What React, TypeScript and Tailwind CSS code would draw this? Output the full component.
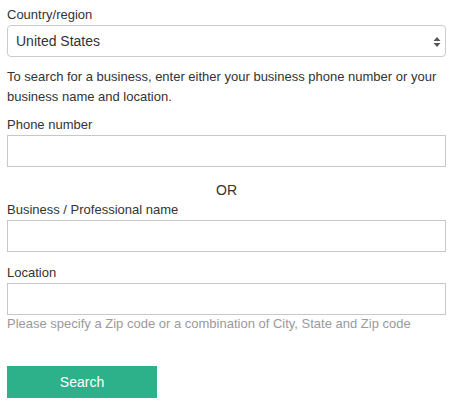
import React from "react";

const Label = ({ children, className = "" }: { children: React.ReactNode; className?: string }) => (
  <label className={`block text-[13px] leading-[18px] text-[#333] ${className}`}>{children}</label>
);

const TextBox = () => (
  <input type="text" className="block w-full h-[32px] border border-[#c8c8c8] bg-white px-2 text-[14px] outline-none" />
);

export default function App() {
  return (
    <div
      className="w-[451px] h-[417px] bg-white pl-[7px] pr-[5px] pt-[6px]"
      style={{ fontFamily: '"Liberation Sans", Arial, sans-serif' }}
    >
      <Label className="mb-px">Country/region</Label>
      <div className="relative h-[32px] border border-[#cbcbcb] rounded-[4px] bg-white flex items-center pl-[8px]">
        <span className="text-[14px] text-[#333]">United States</span>
        <svg className="absolute right-[4px] top-[10px]" width="8" height="12" viewBox="0 0 8 12">
          <path d="M4 1 L7.5 5 L0.5 5 Z" fill="#555" />
          <path d="M4 11 L7.5 7 L0.5 7 Z" fill="#555" />
        </svg>
      </div>
      <p className="mt-[10px] text-[13px] leading-[20px] text-[#333]">
        To search for a business, enter either your business phone number or your business name and location.
      </p>
      <Label className="mt-[9px] mb-px">Phone number</Label>
      <TextBox />
      <div className="mt-[13px] text-center text-[14px] leading-[20px] text-[#333]">OR</div>
      <Label className="mt-px mb-px">Business / Professional name</Label>
      <TextBox />
      <Label className="mt-[12px] mb-px">Location</Label>
      <TextBox />
      <div className="text-[13px] leading-[18px] text-[#9a9a9a]">
        Please specify a Zip code or a combination of City, State and Zip code
      </div>
      <button className="mt-[33px] w-[150px] h-[32px] bg-[#2db18a] text-white text-[14px]">Search</button>
    </div>
  );
}
